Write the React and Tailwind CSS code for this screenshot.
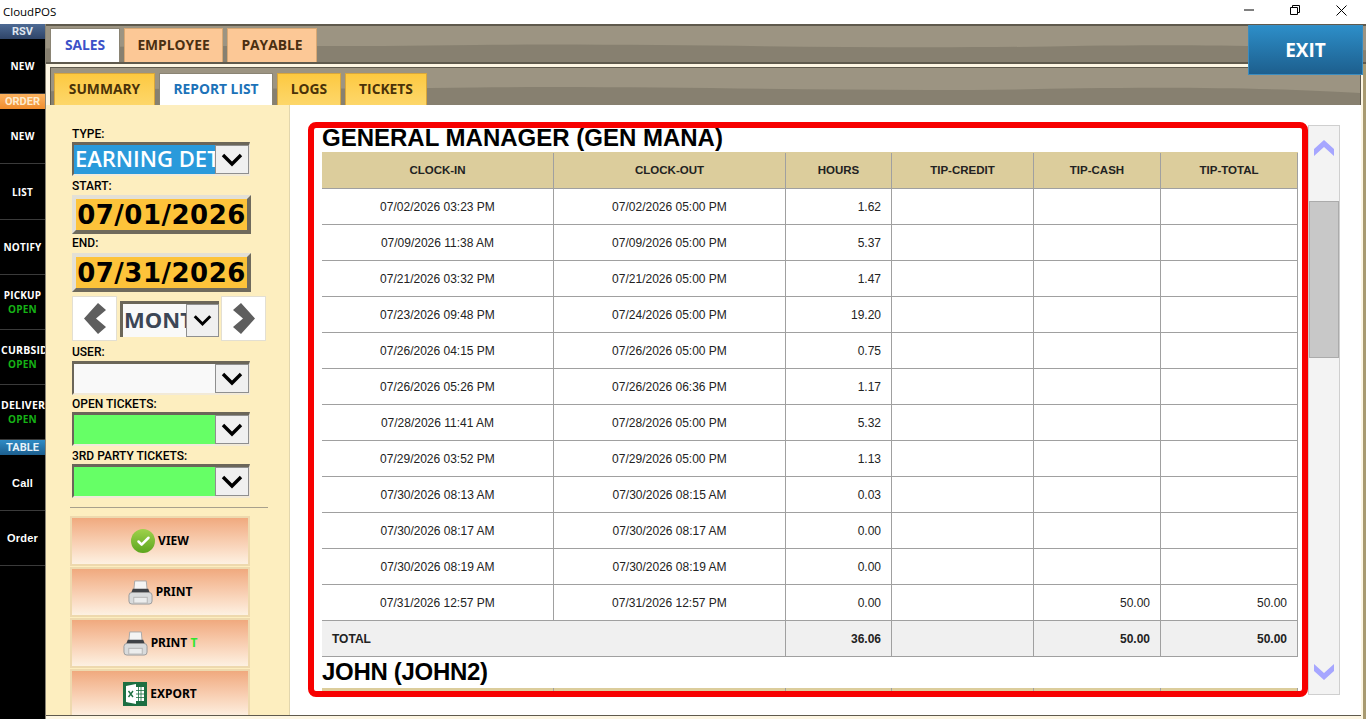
import React from 'react';
import { Check } from 'lucide-react';

const SIDE = [
  { head: 'RSV', cls: 'bg-gradient-to-b from-[#4d6a94] to-[#2f4468] text-[#dfe6f0]' },
  { label: 'NEW' },
  { head: 'ORDER', cls: 'bg-gradient-to-b from-[#fbb25e] to-[#f08d2c] text-[#fdeccf]' },
  { label: 'NEW' },
  { label: 'LIST', tall: true },
  { label: 'NOTIFY' },
  { label: 'PICKUP', sub: 'OPEN' },
  { label: 'CURBSIDE', sub: 'OPEN', clip: true },
  { label: 'DELIVERY', sub: 'OPEN', clip: true },
  { head: 'TABLE', cls: 'bg-gradient-to-b from-[#2f8cc6] to-[#1d5f8f] text-[#e6f2fa]' },
  { label: 'Call', plain: true, tall: true },
  { label: 'Order', plain: true },
];

const ROWS = [
  ['07/02/2026 03:23 PM', '07/02/2026 05:00 PM', '1.62'],
  ['07/09/2026 11:38 AM', '07/09/2026 05:00 PM', '5.37'],
  ['07/21/2026 03:32 PM', '07/21/2026 05:00 PM', '1.47'],
  ['07/23/2026 09:48 PM', '07/24/2026 05:00 PM', '19.20'],
  ['07/26/2026 04:15 PM', '07/26/2026 05:00 PM', '0.75'],
  ['07/26/2026 05:26 PM', '07/26/2026 06:36 PM', '1.17'],
  ['07/28/2026 11:41 AM', '07/28/2026 05:00 PM', '5.32'],
  ['07/29/2026 03:52 PM', '07/29/2026 05:00 PM', '1.13'],
  ['07/30/2026 08:13 AM', '07/30/2026 08:15 AM', '0.03'],
  ['07/30/2026 08:17 AM', '07/30/2026 08:17 AM', '0.00'],
  ['07/30/2026 08:19 AM', '07/30/2026 08:19 AM', '0.00'],
  ['07/31/2026 12:57 PM', '07/31/2026 12:57 PM', '0.00', '', '50.00', '50.00'],
];

const HEADERS = ['CLOCK-IN', 'CLOCK-OUT', 'HOURS', 'TIP-CREDIT', 'TIP-CASH', 'TIP-TOTAL'];
const GRID = 'grid grid-cols-[232px_232px_106px_142px_127px_137px]';

const Wave = () => (
  <svg className="absolute inset-0 w-full h-full" viewBox="0 0 1320 40" preserveAspectRatio="none">
    <path d="M0 25 C120 20 260 24 430 21 C640 19 820 27 1040 22 C1160 20 1260 23 1320 27 L1320 40 L0 40 Z" fill="#878070" />
  </svg>
);

const Chevron = ({ down, className = '' }) => (
  <svg viewBox="0 0 20 16" className={className}>
    <path d={down ? 'M0 0 L10 9 L20 0 L20 7 L10 16 L0 7 Z' : 'M0 16 L10 7 L20 16 L20 9 L10 0 L0 9 Z'} fill="currentColor" />
  </svg>
);

const Dropdown = () => (
  <div className="flex items-center justify-center w-[34px] h-full bg-[#f0f0f0] border border-[#8f8f8f] shrink-0">
    <svg viewBox="0 0 22 14" className="w-[22px] h-[14px]">
      <path d="M2 2 L11 11 L20 2" fill="none" stroke="#000" strokeWidth="3.4" />
    </svg>
  </div>
);

const Select = ({ bg, children, className = '' }) => (
  <div className={`flex w-[178px] h-[34px] shrink-0 border-t-[3px] border-l-2 border-t-[#6b6659] border-l-[#6b6659] border-b-2 border-r border-b-[#f2ead8] border-r-[#f2ead8] ${className}`}>
    <div className={`flex-1 min-w-0 overflow-hidden ${bg}`}>{children}</div>
    <Dropdown />
  </div>
);

const DateBox = ({ value, className = '' }) => (
  <div className={`w-[179px] h-[39px] shrink-0 border-t-4 border-l-4 border-b-4 border-r-4 border-t-[#e3e0d6] border-l-[#e3e0d6] border-b-[#6f6a5c] border-r-[#6f6a5c] bg-[#fdc33a] flex items-center justify-center text-[26px] font-bold tracking-[0.5px] text-black font-['DejaVu_Sans'] leading-none ${className}`}>
    {value}
  </div>
);

const Label = ({ children, className = '' }) => (
  <div className={`text-[12px] leading-[14px] shrink-0 text-black font-['Roboto'] font-medium ${className}`}>{children}</div>
);

const PrinterIcon = () => (
  <svg viewBox="0 0 26 26" className="w-[25px] h-[25px]">
    <path d="M7 1 H19 L20 11 H6 Z" fill="#f4f4f4" stroke="#a8a8a8" />
    <path d="M5 9 H21 L23 14 H3 Z" fill="#3f4247" />
    <rect x="1" y="13" width="24" height="12" rx="3" fill="#d9dbdc" stroke="#9a9a9a" />
    <rect x="6" y="18" width="14" height="6" fill="#eceded" stroke="#b5b5b5" />
  </svg>
);

const ExcelIcon = () => (
  <svg viewBox="0 0 24 24" className="w-6 h-6">
    <rect width="24" height="24" fill="#1d6f42" />
    <path d="M3 4 L13 2 V22 L3 20 Z" fill="#fff" />
    <rect x="13" y="5" width="8" height="14" fill="#fff" />
    <path d="M15.5 5 V19 M18 5 V19 M13 8.5 H21 M13 12 H21 M13 15.5 H21" stroke="#1d6f42" strokeWidth="0.8" />
    <path d="M5.5 9 L10 15 M10 9 L5.5 15" stroke="#1d6f42" strokeWidth="1.4" />
  </svg>
);

const ActionButton = ({ icon, children }) => (
  <div className="w-[180px] h-[50px] shrink-0 border-2 border-[#eed9ae] bg-gradient-to-b from-[#f0a97e] to-[#fdf1e2] flex items-center justify-center gap-[3px] text-[12px] font-bold text-black font-['Noto_Sans']">
    {icon}
    <span>{children}</span>
  </div>
);

const TopTab = ({ active, children, w }) => (
  <div className={`relative h-[34px] flex items-center justify-center text-[13.8px] font-bold font-['Open_Sans'] border border-b-0 ${w} ${active ? 'bg-white text-[#3c52c8] border-[#8a8474]' : 'bg-[#fcc896] text-[#4a2f12] border-[#d8a874]'}`}>
    {children}
  </div>
);

const SubTab = ({ active, children, w }) => (
  <div className={`relative h-[32px] flex items-center justify-center text-[13.8px] font-bold font-['Open_Sans'] border border-b-0 ${w} ${active ? 'bg-white text-[#1c72b8] border-[#8a8474]' : 'bg-gradient-to-b from-[#fdc93f] to-[#fdd76a] text-[#4a3208] border-[#d9a63a]'}`}>
    {children}
  </div>
);

const Cell = ({ children, align = 'text-center', className = '' }) => (
  <div className={`h-full flex items-center border-r border-[#a0a0a0] px-[10px] ${align} ${className}`}>
    <span className="w-full">{children}</span>
  </div>
);

export default function App() {
  return (
    <div className="w-[1366px] h-[719px] overflow-hidden bg-white flex flex-col font-['Liberation_Sans',sans-serif] relative">
      {/* Title bar */}
      <div className="h-6 shrink-0 bg-white flex items-center justify-between pl-[3px] pr-[2px]">
        <span className="text-[11.5px] text-black font-['Open_Sans']">CloudPOS</span>
        <div className="flex items-center -mt-[4px]">
          <div className="w-[46px] h-6 flex items-center justify-center">
            <svg viewBox="0 0 10 10" className="w-[10px] h-[10px]"><path d="M0 5 H10" stroke="#000" /></svg>
          </div>
          <div className="w-[46px] h-6 flex items-center justify-center">
            <svg viewBox="0 0 10 10" className="w-[10px] h-[10px]"><path d="M0.5 2.5 H7.5 V9.5 H0.5 Z M2.5 2.5 V0.5 H9.5 V7.5 H7.5" fill="none" stroke="#000" /></svg>
          </div>
          <div className="w-[46px] h-6 flex items-center justify-center">
            <svg viewBox="0 0 11 11" className="w-[11px] h-[11px]"><path d="M0.5 0.5 L10.5 10.5 M10.5 0.5 L0.5 10.5" stroke="#000" /></svg>
          </div>
        </div>
      </div>

      <div className="flex flex-1 min-h-0">
        {/* Side menu */}
        <div className="w-[45px] shrink-0 bg-black flex flex-col">
          {SIDE.map((item, i) =>
            item.head ? (
              <div key={i} className={`h-[15px] shrink-0 flex items-center justify-center text-[11px] leading-none font-bold font-['Roboto'] ${item.cls}`}>
                {item.head}
              </div>
            ) : (
              <div key={i} className={`${item.tall ? 'h-[56px]' : 'h-[55px]'} shrink-0 border-b border-[#3a3a3a] flex flex-col items-center justify-center overflow-hidden text-white text-[10px] leading-[14px] font-['Open_Sans'] font-bold tracking-[0.2px]`}>
                <span className={`whitespace-nowrap ${item.plain ? "text-[11px] font-['Liberation_Sans'] font-bold" : ''} ${item.clip ? 'self-start pl-[1px] text-[10.5px]' : ''}`}>{item.label}</span>
                {item.sub && <span className="text-[#16b216]">{item.sub}</span>}
              </div>
            )
          )}
        </div>

        {/* Main */}
        <div className="flex-1 min-w-0 flex flex-col bg-[#fdf6e3] border-l border-[#8a8474]">
          {/* Top tabs */}
          <div className="relative h-[40px] shrink-0 bg-[#9c9482] border-t-2 border-b-2 border-[#5f5a4d] flex items-end gap-[4px] pl-[4px]">
            <Wave />
            <TopTab active w="w-[70px]">SALES</TopTab>
            <TopTab w="w-[99px]">EMPLOYEE</TopTab>
            <TopTab w="w-[90px]">PAYABLE</TopTab>
          </div>

          <div className="flex-1 min-h-0 flex flex-col pt-[3px] pl-[4px] pr-[2px] pb-[3px] border-r-[3px] border-[#a89a70]">
            {/* Sub tabs */}
            <div className="relative h-[38px] shrink-0 bg-[#9c9482] border border-b-0 border-[#5f5a4d] flex items-end gap-[4px] pl-[3px]">
              <Wave />
              <SubTab w="w-[101px]">SUMMARY</SubTab>
              <SubTab active w="w-[114px]">REPORT LIST</SubTab>
              <SubTab w="w-[64px]">LOGS</SubTab>
              <SubTab w="w-[82px]">TICKETS</SubTab>
            </div>

            <div className="flex-1 min-h-0 flex -ml-[4px] border-b border-[#5f5a4d]">
              {/* Filters */}
              <div className="w-[244px] shrink-0 bg-[#fdeebf] border-r border-[#e2d6ae] pl-[26px] pt-[22px] flex flex-col overflow-hidden">
                <Label>TYPE:</Label>
                <Select bg="bg-[#fdeebf]" className="mt-[1px]">
                  <div className="bg-[#2a9adb] h-[29px] w-full overflow-hidden whitespace-nowrap text-white text-[22px] leading-[27px] font-['Open_Sans'] font-semibold pl-[1px]">EARNING DETAIL</div>
                </Select>
                <Label className="mt-[3px]">START:</Label>
                <DateBox value="07/01/2026" className="mt-[2px]" />
                <Label className="mt-[2px]">END:</Label>
                <DateBox value="07/31/2026" className="mt-[3px]" />
                <div className="flex items-center mt-[4px] h-[45px] shrink-0">
                  <div className="w-[45px] h-[45px] bg-white border border-[#e3dfd2] flex items-center justify-center text-[#5e5e5e]">
                    <svg viewBox="0 0 22 31" className="w-[22px] h-[31px]"><path d="M0 15.5 L14 0 L22 7 L12 15.5 L22 24 L14 31 Z" fill="currentColor" /></svg>
                  </div>
                  <div className="flex w-[99px] h-[36px] ml-[3px] border-t-[3px] border-l-[3px] border-t-[#6b6659] border-l-[#6b6659] bg-[#f9f9f9]">
                    <div className="flex-1 min-w-0 overflow-hidden whitespace-nowrap text-[22px] leading-[30px] font-bold text-[#3c4656] font-['Open_Sans'] pl-[1px]">MONTH</div>
                    <div className="w-[33px] h-full bg-[#f0f0f0] border border-[#8f8f8f] flex items-center justify-center shrink-0">
                      <svg viewBox="0 0 22 14" className="w-[19px] h-[13px]"><path d="M2 2 L11 11 L20 2" fill="none" stroke="#000" strokeWidth="3.4" /></svg>
                    </div>
                  </div>
                  <div className="w-[45px] h-[45px] ml-[2px] bg-white border border-[#e3dfd2] flex items-center justify-center text-[#5e5e5e]">
                    <svg viewBox="0 0 22 31" className="w-[22px] h-[31px]"><path d="M22 15.5 L8 0 L0 7 L10 15.5 L0 24 L8 31 Z" fill="currentColor" /></svg>
                  </div>
                </div>
                <Label className="mt-[4px]">USER:</Label>
                <Select bg="bg-[#f9f9f9]" className="mt-[2px]" />
                <Label className="mt-[2px]">OPEN TICKETS:</Label>
                <Select bg="bg-[#66ff66]" className="mt-[1px]" />
                <Label className="mt-[3px]">3RD PARTY TICKETS:</Label>
                <Select bg="bg-[#66ff66]" className="mt-[1px]" />
                <div className="w-[198px] -ml-[2px] mt-[9px] h-[1px] shrink-0 bg-[#a8a08c]" />
                <div className="mt-[8px] flex flex-col gap-[1px] -ml-[2px]">
                  <ActionButton icon={
                    <span className="w-6 h-6 rounded-full bg-gradient-to-b from-[#9ed24a] to-[#5da51d] flex items-center justify-center">
                      <Check size={15} color="#fff" strokeWidth={4} />
                    </span>
                  }>VIEW</ActionButton>
                  <ActionButton icon={<PrinterIcon />}>PRINT</ActionButton>
                  <ActionButton icon={<PrinterIcon />}>PRINT <span className="text-[#2ee62e]">T</span></ActionButton>
                  <ActionButton icon={<ExcelIcon />}>EXPORT</ActionButton>
                </div>
              </div>

              {/* Report */}
              <div className="flex-1 min-w-0 bg-white pl-[32px] pt-[20px] flex">
                <div className="w-[976px] h-[570px] shrink-0 overflow-hidden text-[12px] text-[#222]">
                  <div className="text-[24px] leading-[25px] mb-[2px] font-bold text-black">GENERAL MANAGER (GEN MANA)</div>
                  <div className={`${GRID} h-[37px] bg-[#dccd9c] border-b border-[#a0a0a0] font-bold text-[11.5px] pt-[1px]`}>
                    {HEADERS.map((h) => <Cell key={h}>{h}</Cell>)}
                  </div>
                  {ROWS.map((r, i) => (
                    <div key={i} className={`${GRID} h-[36px] border-b border-[#a0a0a0]`}>
                      <Cell>{r[0]}</Cell>
                      <Cell>{r[1]}</Cell>
                      <Cell align="text-right">{r[2]}</Cell>
                      <Cell align="text-right">{r[3]}</Cell>
                      <Cell align="text-right">{r[4]}</Cell>
                      <Cell align="text-right">{r[5]}</Cell>
                    </div>
                  ))}
                  <div className="grid grid-cols-[464px_106px_142px_127px_137px] h-[36px] bg-[#f0f0f0] border-b border-[#a0a0a0] font-bold">
                    <Cell align="text-left">TOTAL</Cell>
                    <Cell align="text-right">36.06</Cell>
                    <Cell />
                    <Cell align="text-right">50.00</Cell>
                    <Cell align="text-right">50.00</Cell>
                  </div>
                  <div className="text-[24px] leading-[29px] mb-[2px] font-bold text-black tracking-[-0.3px]">JOHN (JOHN2)</div>
                  <div className={`${GRID} h-[37px] bg-[#dccd9c] font-bold text-[11.5px]`}>
                    {HEADERS.map((h) => <Cell key={h}>{h}</Cell>)}
                  </div>
                </div>

                {/* Scroll bar */}
                <div className="ml-[10px] w-[32px] h-[570px] shrink-0 bg-[#f3f3f3] border border-[#cfcfcf] flex flex-col items-center relative">
                  <Chevron className="w-5 h-4 text-[#a6a6ff] mt-[14px]" />
                  <div className="w-[30px] h-[157px] bg-[#c8c8c8] border border-[#ababab] mt-[45px]" />
                  <Chevron down className="w-5 h-4 text-[#a6a6ff] mt-auto mb-[14px]" />
                </div>
              </div>
            </div>
          </div>
        </div>
      </div>

      {/* Red highlight around the report */}
      <div className="absolute left-[308px] top-[122px] w-[1000px] h-[575px] border-[6px] border-[#f70000] rounded-[8px] pointer-events-none" />

      {/* Exit */}
      <div className="absolute left-[1248px] top-[25px] w-[115px] h-[50px] bg-gradient-to-b from-[#2d8ec8] to-[#1d5f8e] border border-[#3a8cc0] flex items-center justify-center text-white text-[19px] font-bold font-['Open_Sans']">
        EXIT
      </div>
    </div>
  );
}
